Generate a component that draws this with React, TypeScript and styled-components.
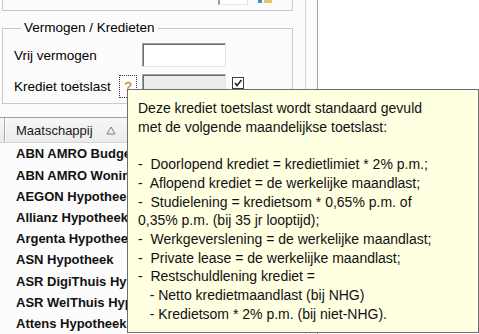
import styled, { createGlobalStyle } from 'styled-components';

const GlobalStyle = createGlobalStyle`
  html, body {
    margin: 0;
    padding: 0;
    background: #ffffff;
  }
  body {
    font-family: 'Liberation Sans', Arial, sans-serif;
    color: #000;
  }
`;

const Screen = styled.div`
  position: relative;
  width: 479px;
  height: 334px;
  overflow: hidden;
  display: flex;
  background: #ffffff;
`;

const LeftPane = styled.div`
  width: 305px;
  display: flex;
  flex-direction: column;
  background: #fcfcfc;
`;

const Splitter = styled.div`
  width: 11px;
  border-left: 1px solid #d4d4d4;
  border-right: 1px solid #a3a3a3;
  background: #fbfbfb;
`;

const RightPane = styled.div`
  flex: 1;
  background: #ffffff;
`;

const TopGroupTail = styled.div`
  margin-left: 2px;
  width: 291px;
  height: 13px;
  box-sizing: border-box;
  border: 1px solid #c9c9c9;
  border-top: 0;
  display: flex;
  align-items: flex-start;
  padding-left: 215px;
  gap: 10px;
`;

const TailInput = styled.div`
  width: 30px;
  height: 5px;
  box-sizing: border-box;
  border-left: 2px solid #9a9a9a;
  border-right: 1px solid #e4e4e4;
  border-bottom: 1px solid #e4e4e4;
  background: #fff;
`;

const TailIcon = styled.div`
  width: 14px;
  height: 3px;
  background: linear-gradient(to right, #4f86c6 0 4px, transparent 4px 6px, #e9c36a 6px 14px);
`;

const GroupBox = styled.fieldset`
  margin: 9px 0 0 2px;
  width: 291px;
  box-sizing: border-box;
  border: 1px solid #c9c9c9;
  padding: 7px 0 5px 11px;
  display: flex;
  flex-direction: column;
  gap: 7px;
`;

const Legend = styled.legend`
  margin-left: 7px;
  padding: 0 3px;
  font-size: 13.5px;
  line-height: 16px;
  color: #000;
`;

const FieldRow = styled.div`
  display: flex;
  align-items: center;
  height: 24px;
`;

const Label = styled.span<{ $width: number }>`
  width: ${(p) => p.$width}px;
  font-size: 13.5px;
  white-space: nowrap;
`;

const HelpButton = styled.div`
  width: 18px;
  height: 23px;
  box-sizing: border-box;
  border: 1px dotted #333;
  margin-right: 5px;
  display: flex;
  align-items: center;
  justify-content: center;
  font-size: 13px;
  color: #b86a00;
  background: #fdfdfd;
`;

const TextInput = styled.div<{ $disabled?: boolean }>`
  width: 84px;
  height: 24px;
  box-sizing: border-box;
  border-top: 1px solid #a0a0a0;
  border-left: 1px solid #a0a0a0;
  border-right: 1px solid #e3e3e3;
  border-bottom: 1px solid #e3e3e3;
  box-shadow: inset 1px 1px 0 #6d6d6d;
  background: ${(p) => (p.$disabled ? '#ececec' : '#ffffff')};
`;

const CheckBox = styled.div`
  width: 12px;
  height: 12px;
  margin-left: 6px;
  align-self: flex-start;
  margin-top: 3px;
  box-sizing: border-box;
  border: 1px solid #3c3c3c;
  background: #fff;
  display: flex;
`;

const Grid = styled.div`
  margin-top: 13px;
  display: flex;
  flex-direction: column;
`;

const HeaderRow = styled.div`
  height: 26px;
  display: flex;
  border-top: 1px solid #9f9f9f;
  border-bottom: 1px solid #d5d5d5;
  background: linear-gradient(to bottom, #f7f7f7, #ebebeb);
  box-sizing: border-box;
`;

const RowIndicator = styled.div`
  width: 4px;
  border-right: 1px solid #a8a8a8;
  box-shadow: 1px 0 0 #ffffff;
`;

const HeaderCell = styled.div`
  width: 117px;
  display: flex;
  align-items: center;
  padding-left: 11px;
  gap: 13px;
  font-size: 13px;
  color: #1a1a1a;
`;

const DataRow = styled.div`
  width: 127px;
  height: 21.2px;
  box-sizing: border-box;
  overflow: hidden;
  display: flex;
  align-items: center;
  padding-left: 16px;
  font-size: 13px;
  font-weight: bold;
  white-space: nowrap;
  color: #111;
`;

const Tooltip = styled.div`
  position: absolute;
  left: 127px;
  top: 89px;
  width: 352px;
  height: 244px;
  box-sizing: border-box;
  border: 1px solid #6e6e6e;
  background: #ffffe1;
  padding: 9px 10px;
  font-size: 14px;
  line-height: 18.7px;
  white-space: pre;
  color: #111;
`;

const companies = [
  'ABN AMRO Budget Hypotheek',
  'ABN AMRO Woninghypotheek',
  'AEGON Hypotheek',
  'Allianz Hypotheek',
  'Argenta Hypotheek',
  'ASN Hypotheek',
  'ASR DigiThuis Hypotheek',
  'ASR WelThuis Hypotheek',
  'Attens Hypotheek',
];

const tipLines = [
  'Deze krediet toetslast wordt standaard gevuld',
  'met de volgende maandelijkse toetslast:',
  '',
  '-  Doorlopend krediet = kredietlimiet * 2% p.m.;',
  '-  Aflopend krediet = de werkelijke maandlast;',
  '-  Studielening = kredietsom * 0,65% p.m. of',
  '0,35% p.m. (bij 35 jr looptijd);',
  '-  Werkgeverslening = de werkelijke maandlast;',
  '-  Private lease = de werkelijke maandlast;',
  '-  Restschuldlening krediet =',
  '   - Netto kredietmaandlast (bij NHG)',
  '   - Kredietsom * 2% p.m. (bij niet-NHG).',
];

export default function App() {
  return (
    <>
      <GlobalStyle />
      <Screen>
        <LeftPane>
          <TopGroupTail>
            <TailInput />
            <TailIcon />
          </TopGroupTail>
          <GroupBox>
            <Legend>Vermogen / Kredieten</Legend>
            <FieldRow>
              <Label $width={128}>Vrij vermogen</Label>
              <TextInput />
            </FieldRow>
            <FieldRow>
              <Label $width={105}>Krediet toetslast</Label>
              <HelpButton>?</HelpButton>
              <TextInput $disabled />
              <CheckBox>
                <svg width="10" height="10" viewBox="0 0 10 10">
                  <path d="M2 5 L4 7.5 L8.5 2" stroke="#222" strokeWidth="1.6" fill="none" />
                </svg>
              </CheckBox>
            </FieldRow>
          </GroupBox>
          <Grid>
            <HeaderRow>
              <RowIndicator />
              <HeaderCell>
                <span>Maatschappij</span>
                <svg width="10" height="9" viewBox="0 0 10 9">
                  <path d="M5 1 L9 8 L1 8 Z" stroke="#7a7a7a" strokeWidth="1" fill="none" />
                </svg>
              </HeaderCell>
            </HeaderRow>
            {companies.map((c) => (
              <DataRow key={c}>{c}</DataRow>
            ))}
          </Grid>
        </LeftPane>
        <Splitter />
        <RightPane />
        <Tooltip>{tipLines.join('\n')}</Tooltip>
      </Screen>
    </>
  );
}
